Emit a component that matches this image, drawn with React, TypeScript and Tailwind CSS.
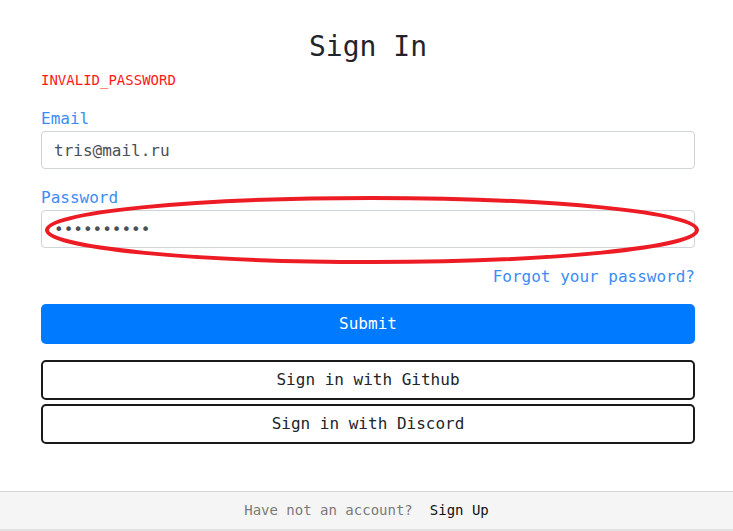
import React from 'react';

const mono = { fontFamily: '"DejaVu Sans Mono", "Liberation Mono", monospace' };

export default function App() {
  return (
    <div className="relative flex h-[531px] w-[733px] flex-col bg-white text-[#212529]" style={mono}>
      <div className="flex flex-1 flex-col pl-[41px] pr-[38px]">
        <h1 className="mt-[29px] text-center text-[28px] leading-[36px]">Sign In</h1>
        <p className="mt-[6px] text-[14px] leading-[18px] text-[#ff1a1a]">INVALID_PASSWORD</p>

        <label className="mt-[20px] text-[16px] leading-[20px] text-[#3b8cf5]">Email</label>
        <input
          className="mt-[2px] h-[38px] rounded-[4px] border border-[#ced4da] px-[12px] text-[16px] text-[#495057] outline-none"
          style={mono}
          defaultValue="tris@mail.ru"
        />

        <label className="mt-[19px] text-[16px] leading-[20px] text-[#3b8cf5]">Password</label>
        <input
          type="password"
          className="mt-[2px] h-[38px] rounded-[4px] border border-[#ced4da] px-[12px] text-[16px] text-[#495057] outline-none"
          style={mono}
          defaultValue="1234567890"
        />

        <div className="mt-[19px] flex justify-end">
          <a className="text-[16px] leading-[20px] text-[#3b8cf5]">Forgot your password?</a>
        </div>

        <button className="mt-[17px] h-[40px] rounded-[5px] bg-[#007bff] text-[16px] text-white" style={mono}>
          Submit
        </button>
        <button
          className="mt-[16px] h-[40px] rounded-[5px] border-2 border-[#1a1a1a] bg-white text-[16px] text-[#212529]"
          style={mono}
        >
          Sign in with Github
        </button>
        <button
          className="mt-[4px] h-[40px] rounded-[5px] border-2 border-[#1a1a1a] bg-white text-[16px] text-[#212529]"
          style={mono}
        >
          Sign in with Discord
        </button>
      </div>

      <div className="flex h-[40px] items-center justify-center gap-[17px] border-t border-b-2 border-t-[#d6d6d6] border-b-[#e2e2e2] bg-[#f5f5f5] text-[14px]">
        <span className="text-[#7a7a7a]">Have not an account?</span>
        <a className="text-[#111]">Sign Up</a>
      </div>

      {/* red annotation around the password field */}
      <svg className="pointer-events-none absolute left-0 top-0" width="733" height="531">
        <ellipse cx="372" cy="230" rx="325" ry="32" fill="none" stroke="#ed1c24" strokeWidth="4" />
      </svg>
    </div>
  );
}
